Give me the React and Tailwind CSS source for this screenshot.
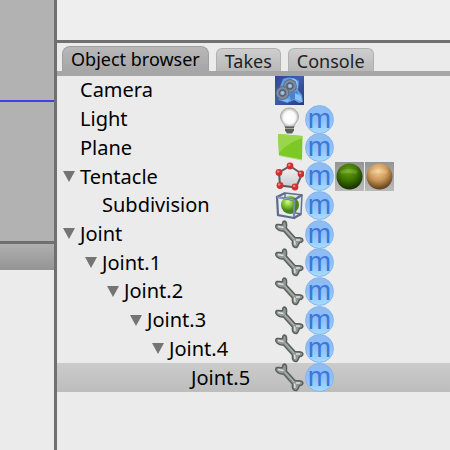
import React from "react";

const INDENT = ["pl-[6px]", "pl-[28px]", "pl-[50px]", "pl-[73px]", "pl-[95px]", "pl-[117px]"];

const ROWS = [
  { name: "Camera", depth: 0, icons: ["camera"] },
  { name: "Light", depth: 0, icons: ["light", "m"] },
  { name: "Plane", depth: 0, icons: ["plane", "m"] },
  { name: "Tentacle", depth: 0, open: true, icons: ["polygon", "m", "green", "gold"] },
  { name: "Subdivision", depth: 1, icons: ["subdivision", "m"] },
  { name: "Joint", depth: 0, open: true, icons: ["bone", "m"] },
  { name: "Joint.1", depth: 1, open: true, icons: ["bone", "m"] },
  { name: "Joint.2", depth: 2, open: true, icons: ["bone", "m"] },
  { name: "Joint.3", depth: 3, open: true, icons: ["bone", "m"] },
  { name: "Joint.4", depth: 4, open: true, icons: ["bone", "m"] },
  { name: "Joint.5", depth: 5, selected: true, icons: ["bone", "m"] },
];

function Defs() {
  return (
    <svg className="absolute size-0" aria-hidden="true">
      <defs>
        <linearGradient id="camBg" x1="0" y1="0" x2="1" y2="1">
          <stop offset="0" stopColor="#35438f" />
          <stop offset=".45" stopColor="#3f5fae" />
          <stop offset="1" stopColor="#2b3778" />
        </linearGradient>
        <radialGradient id="reel">
          <stop offset="0" stopColor="#b3d3f6" />
          <stop offset=".25" stopColor="#90aed0" />
          <stop offset=".4" stopColor="#505a6c" />
          <stop offset=".75" stopColor="#8a96a6" />
          <stop offset="1" stopColor="#4d586c" />
        </radialGradient>
        <radialGradient id="bulb">
          <stop offset="0" stopColor="#fff" />
          <stop offset=".65" stopColor="#fafafa" />
          <stop offset="1" stopColor="#b9b9b9" />
        </radialGradient>
        <linearGradient id="face" x1="0" y1="0" x2="0" y2="1">
          <stop offset="0" stopColor="#f4f4f4" />
          <stop offset="1" stopColor="#c7cacd" />
        </linearGradient>
        <radialGradient id="lime" cx=".38" cy=".32">
          <stop offset="0" stopColor="#d8f7a2" />
          <stop offset=".45" stopColor="#8ccf3a" />
          <stop offset="1" stopColor="#48851a" />
        </radialGradient>
        <radialGradient id="green" cx=".45" cy=".3" r=".7">
          <stop offset="0" stopColor="#67a20c" />
          <stop offset=".5" stopColor="#3e7402" />
          <stop offset="1" stopColor="#142c02" />
        </radialGradient>
        <radialGradient id="gold" cx=".45" cy=".3" r=".7">
          <stop offset="0" stopColor="#f6cd91" />
          <stop offset=".5" stopColor="#cc9858" />
          <stop offset="1" stopColor="#5c3d1b" />
        </radialGradient>
        <linearGradient id="swatch" x1="0" y1="0" x2="0" y2="1">
          <stop offset="0" stopColor="#949494" />
          <stop offset="1" stopColor="#bababa" />
        </linearGradient>
      </defs>
    </svg>
  );
}

function Drawing({ kind }) {
  switch (kind) {
    case "camera":
      return (
        <>
          <rect width="29" height="29" fill="url(#camBg)" />
          <path d="M8 3Q16-1 24 5L23 14 27 19 28 26 24 27 19 24 12 27 4 24 2 19Z" fill="#5f9fe6" />
          <path d="M17 3Q23 3 22 12" fill="none" stroke="#8fc6fa" strokeWidth="1.5" />
          <path d="M14 18L22 15 24 22 16 24Z" fill="#4a80cc" />
          <path d="M20 17L26 20 27 26 20 23Z" fill="#8bc3f5" />
          <path d="M6 24L14 23 13 26Z" fill="#86bdf4" />
          <circle cx="15" cy="10" r="6.8" fill="url(#reel)" />
          <circle cx="7.5" cy="17" r="6.8" fill="url(#reel)" />
        </>
      );
    case "light":
      return (
        <>
          <path d="M14.5 3C9 3 5.500 7 5.500 12c0 4 4 6 4.500 10h9c.5-4 4.500-6 4.500-10 0-5-3.500-9-9-9Z" fill="url(#bulb)" stroke="#adadad" />
          <path d="M10 21.500h9v4l-2 3h-5l-2-3Z" fill="#5e5e5e" />
          <path d="M10 23.500h9" stroke="#a5a5a5" />
        </>
      );
    case "plane":
      return (
        <>
          <path d="M3 1L27.500 3 27 27 4 22.500Z" fill="#7cc824" />
          <path d="M3 1L27.500 3V5Q12 10 4 20Z" fill="#99d64c" />
          <path d="M4 22.500L27 27" stroke="#b7df83" />
        </>
      );
    case "polygon":
      return (
        <>
          <path d="M15 4L27 12 21 25.500 5 23.500 4 10.500Z" fill="url(#face)" stroke="#5b5b5b" strokeWidth="2" />
          {[[15, 4], [26, 12], [20, 25], [5, 23.5], [4, 10.5]].map(([x, y]) => (
            <g key={x}>
              <circle cx={x} cy={y} r="3.4" fill="#cb3032" />
              <circle cx={x - 0.8} cy={y - 1} r="1.3" fill="#ee7f7a" />
            </g>
          ))}
        </>
      );
    case "subdivision":
      return (
        <>
          <path d="M10 2L27 4 26 23 10 20Z" fill="#dfe4ed" stroke="#60708f" strokeWidth="1.5" />
          <circle cx="15" cy="14" r="9" fill="url(#lime)" />
          <path d="M2 6L19 9 19 27 3 24ZM2 6L10 2M19 9L27 4M19 27L26 23" fill="none" stroke="#5a6c90" strokeWidth="2.2" />
          <path d="M2 6L19 9V26" fill="none" stroke="#aab8d2" strokeWidth=".8" />
        </>
      );
    case "bone":
      return (
        <>
          <path d="M2 4.500C4 4.500 6.500 5 7.500 4.500 7.500 2 8.500.8 10 1.200 12 2 11.800 5 11.300 8L20 17.500C23 18 25 17 27 18.500 29 20.500 27 22.500 24.500 22.500 23.500 24 23.500 26.500 21.500 27.500 18 28 17 25 17.500 21L8.500 11C6 11.500 2 10 1 7.500.5 6 1 4.800 2 4.500Z" fill="#929995" stroke="#59605d" strokeWidth="1.500" />
          <path d="M3 6.500L8.500 7.500M19.500 20.500L20 25M21 20L25 20" fill="none" stroke="#dce1de" strokeWidth="1.500" />
          <path d="M9.500 8.500L19 19" stroke="#b3bab6" />
        </>
      );
    default:
      return (
        <>
          <rect width="29" height="29" fill="url(#swatch)" />
          <circle cx="14.5" cy="14.5" r="13" fill={kind === "green" ? "url(#green)" : "url(#gold)"} />
          <path d="M5 9Q14 5 23 9L21 12Q14 10 6 12Z" fill="#fff" opacity=".16" />
        </>
      );
  }
}

function Icon({ kind }) {
  if (kind === "m") {
    return (
      <span className="flex size-[29px] shrink-0 justify-center rounded-full border border-[#86b5ee] bg-linear-to-b from-[#8fbcf3] via-[#8dbffb] to-[#a6dcff] font-['Liberation_Sans_Narrow','Liberation_Sans',sans-serif] text-[28px] leading-[26px] text-[#3b78d8]">
        m
      </span>
    );
  }
  return (
    <svg viewBox="0 0 29 29" className="size-[29px] shrink-0" aria-hidden="true">
      <Drawing kind={kind} />
    </svg>
  );
}

function Row({ name, depth, open, selected, icons }) {
  return (
    <li className={`flex items-center ${selected ? "bg-linear-to-b from-[#cbcbcb] to-[#bdbdbd]" : ""}`}>
      <div className={`flex w-[218px] shrink-0 items-center ${INDENT[depth]}`}>
        <span className="flex w-[17px] shrink-0">
          {open && (
            <button type="button" aria-label={`Collapse ${name}`}>
              <svg viewBox="0 0 12 11" className="h-[11px] w-3 fill-[#747474]">
                <path d="M0 0H12L6 11Z" />
              </svg>
            </button>
          )}
        </span>
        <span className="text-xl leading-7">{name}</span>
      </div>
      <div className="flex gap-px">
        {icons.map((kind) => (
          <Icon key={kind} kind={kind} />
        ))}
      </div>
    </li>
  );
}

export default function App() {
  return (
    <div className="flex min-h-screen bg-[#ebebeb] font-['Noto_Sans',sans-serif] text-black">
      <Defs />
      <aside className="flex w-[57px] shrink-0 flex-col border-r-3 border-[#707070]">
        <div className="h-[100px] bg-[#b2b2b2]" />
        <div className="h-[2px] bg-[#4040e0]" />
        <div className="h-[139px] bg-[#b2b2b2]" />
        <div className="h-[3px] bg-[#707070]" />
        <div className="h-[26px] bg-linear-to-b from-[#b0b0b0] to-[#949494]" />
      </aside>
      <main className="min-w-0 flex-1">
        <div className="h-[43px] border-b-3 border-[#707070] bg-[#eeeeee]" />
        <div role="tablist" className="flex h-[33px] items-end gap-[7px] border-b-5 border-[#a6a6a6] pl-[5px]">
          <button type="button" role="tab" aria-selected="true" className="h-[25px] rounded-t-lg border border-b-0 border-[#a0a0a0] bg-linear-to-b from-[#b8b8b8] to-[#a6a6a6] px-2 text-lg leading-6">
            Object browser
          </button>
          <button type="button" role="tab" aria-selected="false" className="h-[23px] rounded-t-md border border-b-0 border-[#b0b0b0] bg-linear-to-b from-[#cecece] to-[#b8b8b8] px-2 text-lg leading-6 text-[#222]">
            Takes
          </button>
          <button type="button" role="tab" aria-selected="false" className="h-[23px] rounded-t-md border border-b-0 border-[#b0b0b0] bg-linear-to-b from-[#cecece] to-[#b8b8b8] px-2 text-lg leading-6 text-[#222]">
            Console
          </button>
        </div>
        <ul className="grid h-[316px] grid-rows-11">
          {ROWS.map((row) => (
            <Row key={row.name} {...row} />
          ))}
        </ul>
      </main>
    </div>
  );
}
